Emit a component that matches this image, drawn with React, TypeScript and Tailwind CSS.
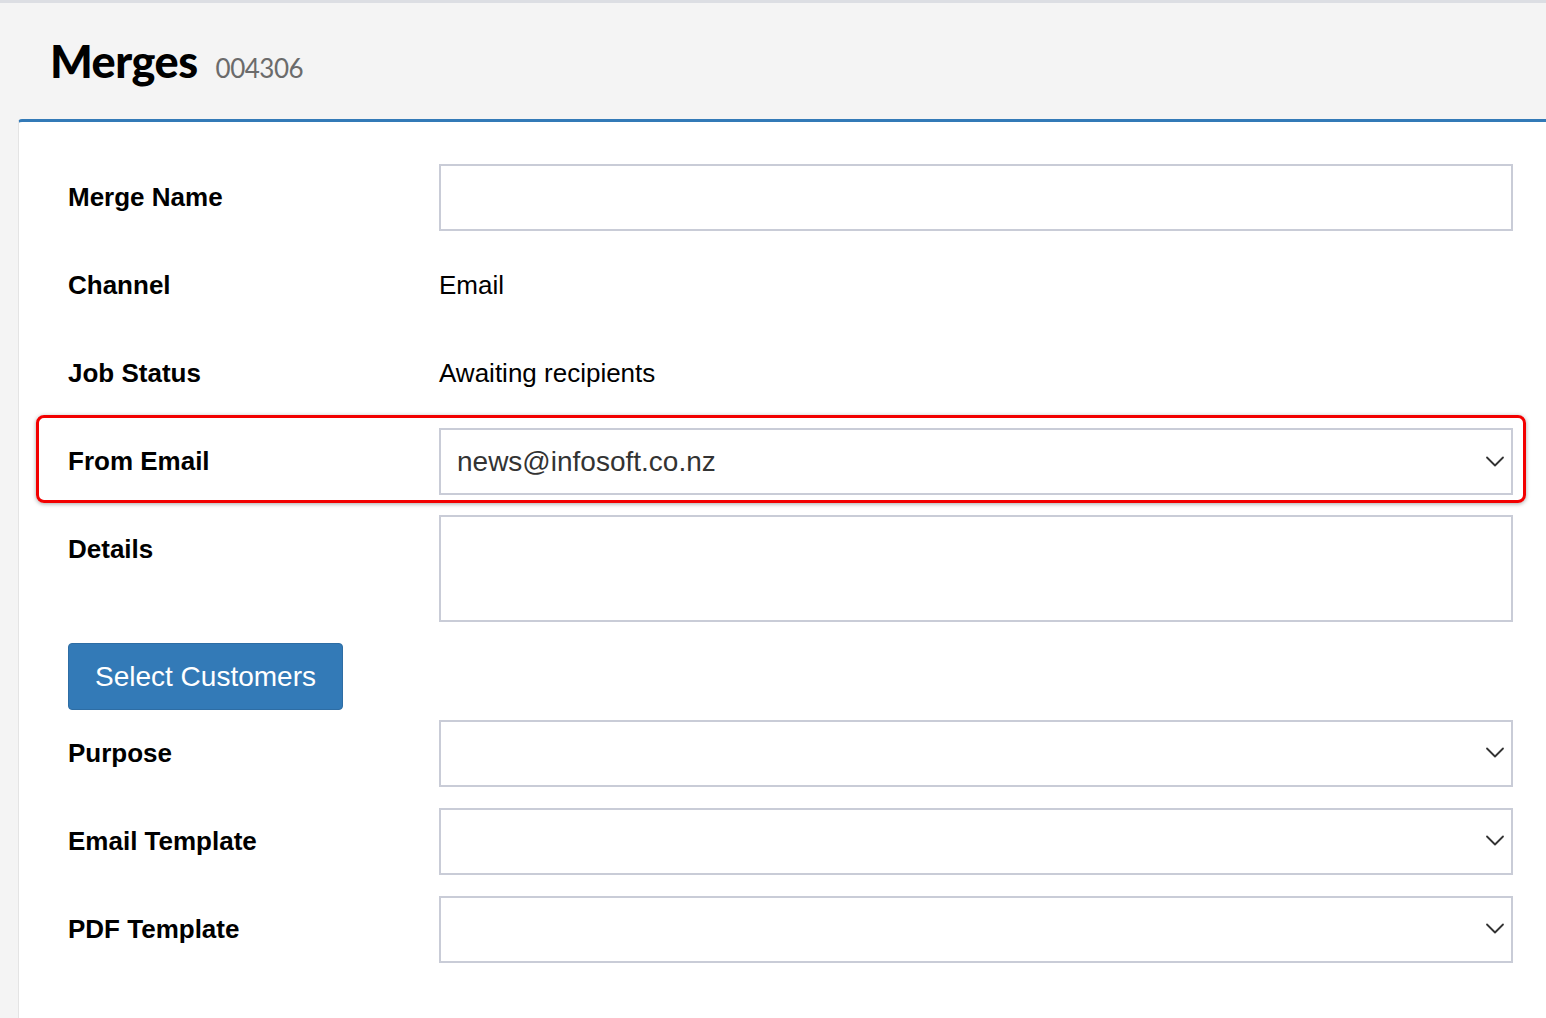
const sans = "font-['Liberation_Sans',Arial,sans-serif]";

function Label({ children }: { children: React.ReactNode }) {
    return <div className={`w-[371px] shrink-0 text-[26px] font-bold text-black ${sans}`}>{children}</div>;
}

function Chevron() {
    return (
        <svg width="20" height="12" viewBox="0 0 20 12" fill="none" className="mr-[6px]">
            <path d="M2 1.5 L10 9.5 L18 1.5" stroke="#333" strokeWidth="1.8" strokeLinecap="round" strokeLinejoin="round" />
        </svg>
    );
}

function Select({ value }: { value?: string }) {
    return (
        <div className="flex-1 h-[67px] border-2 border-[#c9ccd7] bg-white flex items-center pl-[16px]">
            <span className={`flex-1 text-[28px] text-[#333] ${sans}`}>{value}</span>
            <Chevron />
        </div>
    );
}

export default function App() {
    return (
        <div className="min-h-screen bg-[#f4f4f4] border-t-[3px] border-[#dcdee3]">
            {/* Header */}
            <div className="h-[116px] flex items-baseline pl-[50px] pt-[36px] gap-[18px] font-['Lato',sans-serif]">
                <h1 className="text-[45px] font-black text-black leading-none tracking-[-0.5px]">Merges</h1>
                <span className="text-[26px] text-[#6b6b6b] leading-none tracking-[-0.5px]">004306</span>
            </div>

            {/* Card */}
            <div className="ml-[18px] min-h-[899px] bg-white border-t-[3px] border-[#337ab7] border-l border-l-[#e4e4e4] rounded-tl-[4px] pt-[31px] pl-[49px] pr-[33px]">
                <div className="flex items-center h-[88px]">
                    <Label>Merge Name</Label>
                    <div className="flex-1 h-[67px] border-2 border-[#c9ccd7]" />
                </div>

                <div className="flex items-center h-[88px]">
                    <Label>Channel</Label>
                    <span className={`text-[26px] text-black ${sans}`}>Email</span>
                </div>

                <div className="flex items-center h-[88px]">
                    <Label>Job Status</Label>
                    <span className={`text-[26px] text-black ${sans}`}>Awaiting recipients</span>
                </div>

                {/* highlighted row */}
                <div className="flex items-center h-[88px] -mt-[2px] pt-[5px] -ml-[32px] -mr-[13px] pl-[29px] pr-[10px] border-[3px] border-[#f20000] rounded-[8px] shadow-[0_1px_4px_rgba(0,0,0,0.35)]">
                    <Label>From Email</Label>
                    <Select value="news@infosoft.co.nz" />
                </div>

                <div className="flex items-start pt-[2px]">
                    <div className="h-[88px] flex items-center">
                        <Label>Details</Label>
                    </div>
                    <div className="flex-1 h-[107px] mt-[10px] mb-[10px] border-2 border-[#c9ccd7]" />
                </div>

                <div className="pt-[11px]">
                    <button className={`w-[275px] h-[67px] bg-[#337ab7] border border-[#2e6da4] rounded-[4px] text-white text-[28px] ${sans}`}>
                        Select Customers
                    </button>
                </div>

                <div className="flex items-center h-[88px] -mt-[1px]">
                    <Label>Purpose</Label>
                    <Select />
                </div>

                <div className="flex items-center h-[88px]">
                    <Label>Email Template</Label>
                    <Select />
                </div>

                <div className="flex items-center h-[88px]">
                    <Label>PDF Template</Label>
                    <Select />
                </div>
            </div>
        </div>
    );
}
